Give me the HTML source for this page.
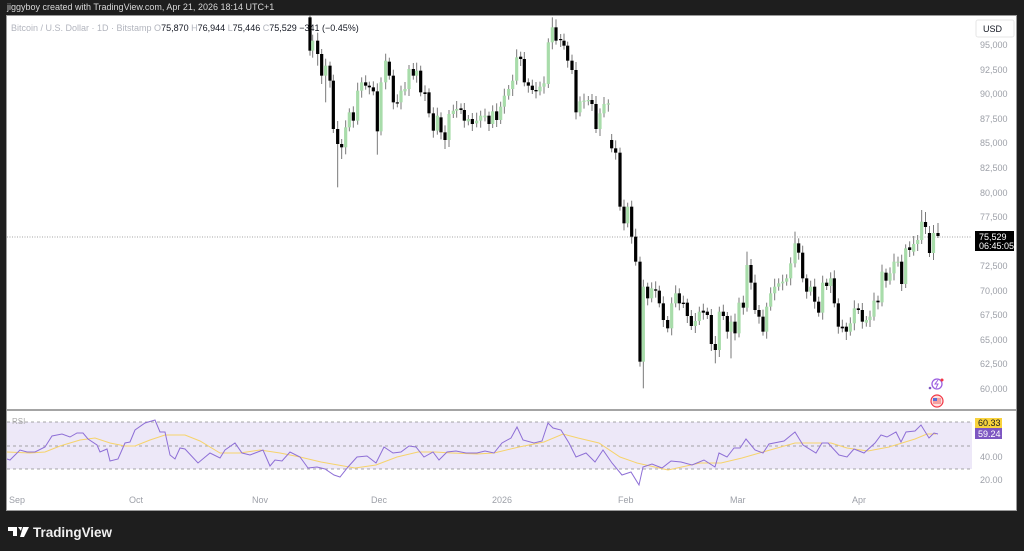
<!DOCTYPE html>
<html><head><meta charset="utf-8"><style>
*{margin:0;padding:0;box-sizing:border-box}
body{width:1024px;height:551px;background:#1e1e1e;position:relative;overflow:hidden;font-family:"Liberation Sans",sans-serif}
.hdr{position:absolute;left:7px;top:2px;font-size:9px;color:#d8d8d8}
.chart{position:absolute;left:6px;top:15px;width:1011px;height:496px;background:#fff;border:1px solid #9a9a9a}
svg{position:absolute;left:0;top:0}
.lbl{font-size:9px;fill:#9da0a8}
</style></head><body>
<div class="hdr">jiggyboy created with TradingView.com, Apr 21, 2026 18:14 UTC+1</div>
<div class="chart"></div>
<svg width="1024" height="551" id="s">
<g font-family="Liberation Sans, sans-serif">
<text x="11" y="31" font-size="9" fill="#b2b5be">Bitcoin / U.S. Dollar · 1D · Bitstamp <tspan fill="#b2b5be">O</tspan><tspan fill="#131722">75,870</tspan> <tspan>H</tspan><tspan fill="#131722">76,944</tspan> <tspan>L</tspan><tspan fill="#131722">75,446</tspan> <tspan>C</tspan><tspan fill="#131722">75,529</tspan> <tspan fill="#131722">−341 (−0.45%)</tspan></text>
<rect x="976" y="20" width="38" height="17" rx="2" fill="#fff" stroke="#e6e6e6"/>
<text x="983" y="32" font-size="9" fill="#131722">USD</text>
<g class="lbl" font-size="9">
<text x="980" y="48">95,000</text><text x="980" y="73">92,500</text><text x="980" y="97">90,000</text><text x="980" y="122">87,500</text><text x="980" y="146">85,000</text><text x="980" y="171">82,500</text><text x="980" y="196">80,000</text><text x="980" y="220">77,500</text><text x="980" y="269">72,500</text><text x="980" y="294">70,000</text><text x="980" y="318">67,500</text><text x="980" y="343">65,000</text><text x="980" y="367">62,500</text><text x="980" y="392">60,000</text>
<text x="980" y="460">40.00</text><text x="980" y="483">20.00</text>
<text x="9" y="503">Sep</text><text x="129" y="503">Oct</text><text x="252" y="503">Nov</text><text x="371" y="503">Dec</text><text x="492" y="503">2026</text><text x="618" y="503">Feb</text><text x="730" y="503">Mar</text><text x="852" y="503">Apr</text>
</g>
<line x1="7" y1="237" x2="972" y2="237" stroke="#888" stroke-dasharray="1,1.5" stroke-width="0.8"/>
<line x1="7" y1="410" x2="1016" y2="410" stroke="#6e6e6e" stroke-width="1.2"/>
<rect x="7" y="422" width="965" height="47" fill="#ede8f8"/>
<g stroke="#8a8a8a" stroke-dasharray="3,3" stroke-width="0.8"><line x1="7" y1="422" x2="972" y2="422"/><line x1="7" y1="446" x2="972" y2="446"/><line x1="7" y1="469" x2="972" y2="469"/></g>
<text x="12" y="424" font-size="8" fill="#aaa">RSI</text>
<polyline fill="none" stroke="#f6d36b" stroke-width="1" points="7,452 30,453 45,452 60,446 80,440 95,438 110,443 125,446 135,446 150,440 165,435 185,435 200,441 220,453 240,453 260,450 280,453 300,457 321,462 355,468 376,465 397,457 418,452 435,452 452,453 477,454 494,453 519,447 544,442 563,434 578,438 599,443 620,457 637,463 668,470 700,463 721,463 742,458 763,452 795,443 831,443 847,448 868,451 889,447 915,439 927,434 936,434"/>
<polyline fill="none" stroke="#8e6fd6" stroke-width="1" points="7,459 10,460 20,450 27,452 35,452 45,447 52,436 62,434 70,437 77,433 83,433 88,439 97,445 100,452 107,449 110,461 118,459 125,443 130,442 135,430 145,423 155,420 160,432 165,432 170,455 175,459 180,448 185,449 198,463 210,453 220,458 225,450 235,443 242,453 250,455 263,450 270,466 275,460 282,461 290,452 300,457 308,468 317,467 325,469 334,475 340,477 348,467 357,457 367,456 376,463 384,447 393,453 401,452 409,446 416,447 424,457 433,452 439,460 447,452 456,451 466,453 477,453 485,451 494,453 502,443 511,438 517,427 523,440 534,443 542,441 548,423 553,428 561,430 569,443 576,457 586,453 595,462 603,450 612,463 622,475 631,472 639,485 643,467 652,464 662,468 671,461 681,462 692,465 704,460 715,467 719,453 727,457 734,448 740,448 746,439 755,450 763,453 769,444 784,441 795,432 803,445 816,453 822,443 828,443 839,455 847,457 854,449 864,453 875,443 881,435 887,437 896,432 901,442 906,432 915,431 921,425 929,438 934,433 938,434"/>
<rect x="975" y="418" width="27" height="10" fill="#f9d33c"/><text x="978" y="426" font-size="9" fill="#131722">60.33</text>
<rect x="975" y="428" width="27" height="11" fill="#7e57c2"/><text x="978" y="437" font-size="9" fill="#fff">59.24</text>
<g id="c"></g>
<rect x="975" y="231" width="39" height="20" fill="#000"/>
<text x="979" y="240" font-size="9" fill="#fff">75,529</text><text x="979" y="249" font-size="9" fill="#fff">06:45:05</text>
<circle cx="937" cy="384" r="5" fill="none" stroke="#9c5fe0" stroke-width="1.3"/><path d="M938,380 l-3,4 h3 l-2,4" stroke="#9c5fe0" fill="none" stroke-width="1"/><circle cx="942" cy="380" r="1.5" fill="#f23645"/><circle cx="930" cy="388" r="1.3" fill="#7e57c2"/>
<circle cx="937" cy="401" r="6" fill="#fde0e0" stroke="#f23645" stroke-width="1.2"/><rect x="933" y="398" width="8" height="6" fill="#f4a0a0"/><rect x="933" y="398" width="4" height="3" fill="#5b6fd6"/>
<path d="M8,527 h9 v9 h-4 v-5 h-5z M18,527 h4 l-1,4z M23,527 h6 l-5,10 h-4z" fill="#fff"/>
<text x="33" y="537" font-size="14" font-weight="bold" fill="#f0f0f0" textLength="79" lengthAdjust="spacingAndGlyphs">TradingView</text>
</g>
</svg>
<script>
var A=[[60,10,110,'k',0,125],[68,80,110,'g'],[83,80,120,'k',0,155],[95,120,185,'k',0,210],[107,155,185,'g',0,265],[120,155,200,'k'],[130,200,345,'k'],[143,345,390,'k',0,520],[155,390,400,'k',0,435],[167,340,400,'g'],[178,295,340,'g'],[190,295,320,'k'],[203,230,320,'g'],[215,205,230,'g'],[227,205,215,'k'],[238,215,220,'k'],[250,220,232,'k'],[262,232,352,'k',0,422],[273,205,352,'g'],[287,140,205,'g'],[298,143,185,'k'],[310,185,265,'k'],[322,265,268,'k'],[333,230,265,'g'],[345,225,232,'g'],[357,165,225,'g'],[370,165,185,'k'],[380,170,185,'g'],[392,170,235,'k'],[405,235,240,'k'],[417,235,298,'k'],[430,298,350,'k'],[442,305,350,'g'],[453,310,355,'k'],[465,355,378,'k',0,405],[477,300,378,'g'],[490,290,300,'g'],[500,285,290,'g'],[513,283,288,'k'],[523,288,320,'k'],[535,315,322,'g'],[547,315,330,'k'],[560,320,328,'g'],[572,305,320,'g'],[585,305,310,'g'],[597,305,330,'k'],[608,292,330,'g'],[620,292,318,'k'],[632,278,318,'g'],[643,245,278,'g'],[656,225,245,'g'],[668,200,225,'g'],[680,130,200,'g'],[692,128,135,'k'],[703,135,205,'k'],[715,205,215,'k'],[727,215,228,'k'],[738,228,232,'k'],[750,218,232,'g'],[762,208,218,'g'],[775,85,210,'g'],[787,40,85,'g',10],[798,40,80,'k'],[812,75,78,'k'],[822,80,95,'k'],[833,95,140,'k'],[846,140,168,'k'],[858,168,295,'k'],[870,262,295,'g'],[882,260,263,'g'],[895,258,262,'g'],[906,258,270,'k'],[918,270,345,'k'],[930,298,345,'g'],[942,270,298,'g'],[955,268,272,'g']];
var B=[[35,0,25,'k'],[47,25,38,'k'],[60,38,200,'k'],[72,200,250,'k'],[83,200,250,'g'],[95,200,290,'k'],[107,290,365,'k'],[120,365,665,'k',0,680],[130,440,665,'g',0,745],[143,440,475,'k'],[155,445,475,'g'],[167,448,452,'k'],[178,452,490,'k'],[190,490,540,'k'],[203,540,565,'k'],[215,490,565,'g'],[227,460,490,'g'],[238,460,490,'k'],[250,488,492,'k'],[262,488,528,'k'],[274,528,558,'k'],[286,543,558,'g'],[298,515,543,'g'],[310,512,518,'k'],[322,515,525,'k'],[334,525,612,'k'],[346,612,630,'k',0,670],[358,515,630,'g'],[370,515,528,'k'],[382,528,575,'k'],[393,545,575,'g',0,655],[405,545,580,'k'],[417,488,580,'g'],[430,488,503,'k'],[441,375,503,'g',335],[453,375,428,'k'],[465,428,510,'k'],[477,510,530,'k'],[489,530,575,'k'],[500,500,575,'g'],[512,460,500,'g'],[524,440,460,'g'],[536,430,440,'g'],[548,425,430,'g'],[560,415,425,'g'],[572,370,415,'g'],[585,310,370,'g',275],[596,310,338,'k'],[608,338,415,'k'],[620,415,455,'k'],[632,440,455,'g'],[644,440,485,'k'],[656,485,518,'k'],[668,428,518,'g'],[680,428,438,'k'],[692,415,438,'g'],[703,415,490,'k'],[715,490,560,'k'],[727,560,565,'k'],[739,560,575,'k',0,600],[751,550,575,'g'],[763,505,550,'g'],[775,505,510,'k'],[787,510,545,'k'],[799,540,548,'g'],[810,530,540,'g'],[822,482,530,'g'],[834,482,487,'k'],[846,395,487,'g'],[858,398,422,'k'],[870,400,422,'g'],[882,365,400,'g'],[894,365,368,'g'],[905,365,432,'k'],[917,325,432,'g'],[929,322,330,'k'],[941,312,335,'g'],[953,300,312,'g'],[965,245,300,'g',210]];
var C=[];
A.forEach(function(a){C.push([290+a[0]/3,14+a[1]/3,14+a[2]/3,a[3],a[4]!=null&&a[4]?14+a[4]/3:null,a[5]?14+a[5]/3:null]);});
B.forEach(function(a){C.push([600+a[0]/3,140+a[1]/3,140+a[2]/3,a[3],a[4]?140+a[4]/3:null,a[5]?140+a[5]/3:null]);});
C.push([925.5,222,227,'k',212,null]);C.push([929.5,233,253,'k',226,null]);C.push([933.5,233,253,'g',null,null]);C.push([938,233,236,'k',223,238]);
C[0][4]=15;
var h='';
C.forEach(function(c,i){var x=c[0],t=c[1],b=c[2];var hi=c[4]!=null?c[4]:t-4-(i*7%5),lo=c[5]!=null?c[5]:b+4+(i*3%6);
h+='<line x1="'+x+'" x2="'+x+'" y1="'+hi+'" y2="'+lo+'" stroke="#7a7a7a" stroke-width="1"/>';
h+='<rect x="'+(x-1.6)+'" y="'+t+'" width="3.2" height="'+Math.max(1.2,b-t)+'" fill="'+(c[3]=='g'?'#a8dcaa':'#000')+'"/>';});
document.getElementById('c').innerHTML=h;
</script>
</body></html>
